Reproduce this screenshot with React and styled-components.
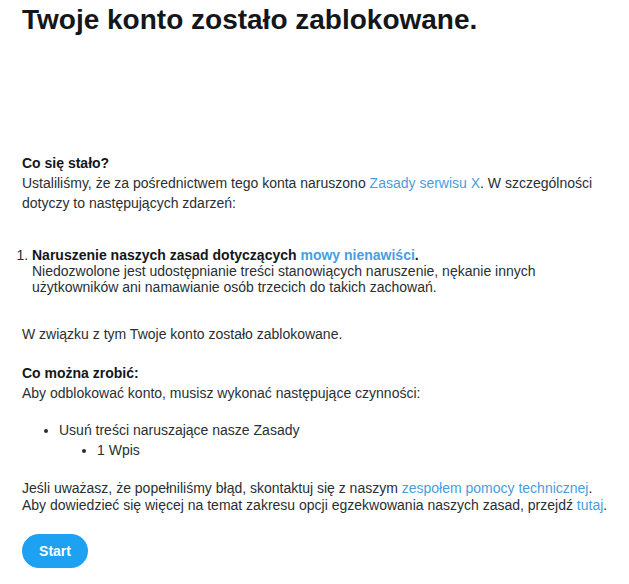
import styled, { createGlobalStyle } from 'styled-components';

const GlobalStyle = createGlobalStyle`
body {
  margin: 0;
  background: #fff;
  font-family: "Liberation Sans", Arial, sans-serif;
  color: #292f33;
}
`

function App() {
    return (
        <Page>
            <GlobalStyle />
            <Title>Twoje konto zostało zablokowane.</Title>

            <Block $top={116}>
                <Heading>Co się stało?</Heading>
                <Text>
                    Ustaliliśmy, że za pośrednictwem tego konta naruszono <Link href="#">Zasady serwisu X</Link>. W szczególności
                    dotyczy to następujących zdarzeń:
                </Text>
            </Block>

            <Violations>
                <li>
                    <strong>Naruszenie naszych zasad dotyczących <Link href="#">mowy nienawiści</Link>.</strong>
                    <br />
                    Niedozwolone jest udostępnianie treści stanowiących naruszenie, nękanie innych
                    użytkowników ani namawianie osób trzecich do takich zachowań.
                </li>
            </Violations>

            <Block $top={29}>
                <Text>W związku z tym Twoje konto zostało zablokowane.</Text>
            </Block>

            <Block $top={19}>
                <Heading>Co można zrobić:</Heading>
                <Text>Aby odblokować konto, musisz wykonać następujące czynności:</Text>
            </Block>

            <Steps>
                <li>
                    Usuń treści naruszające nasze Zasady
                    <Steps $nested>
                        <li>1 Wpis</li>
                    </Steps>
                </li>
            </Steps>

            <Footer>
                Jeśli uważasz, że popełniliśmy błąd, skontaktuj się z naszym <Link href="#">zespołem pomocy technicznej</Link>.
                <br />
                Aby dowiedzieć się więcej na temat zakresu opcji egzekwowania naszych zasad, przejdź <Link href="#">tutaj</Link>.
            </Footer>

            <StartButton>Start</StartButton>
        </Page>
    )
}

export default App

const Page = styled.div`
padding: 3px 8px 20px 22px;
font-size: 14px;
`

const Title = styled.h1`
margin: 0;
font-size: 28px;
line-height: 34px;
font-weight: bold;
color: #14171a;
`

const Block = styled.div`
margin-top: ${p => p.$top}px;
`

const Heading = styled.div`
font-weight: bold;
line-height: 20px;
color: #14171a;
`

const Text = styled.div`
line-height: 20px;
max-width: 580px;
`

const Link = styled.a`
color: #4a9de0;
text-decoration: none;
`

const Violations = styled.ol`
margin: 34px 0 0 0;
padding-left: 10px;
line-height: 16px;
max-width: 580px;

strong {
  color: #14171a;
}
`

const Steps = styled.ul`
margin: ${p => (p.$nested ? '0' : '17px 0 0 0')};
padding-left: ${p => (p.$nested ? '38px' : '37px')};
list-style: disc;
line-height: 20px;
`

const Footer = styled.p`
margin: 20px 0 0 0;
line-height: 17px;
white-space: nowrap;
`

const StartButton = styled.button`
display: block;
margin-top: 20px;
width: 66px;
height: 34px;
border: none;
border-radius: 17px;
background: #1da1f2;
color: #fff;
font-family: "Liberation Sans", Arial, sans-serif;
font-size: 14px;
font-weight: bold;
cursor: pointer;
`
